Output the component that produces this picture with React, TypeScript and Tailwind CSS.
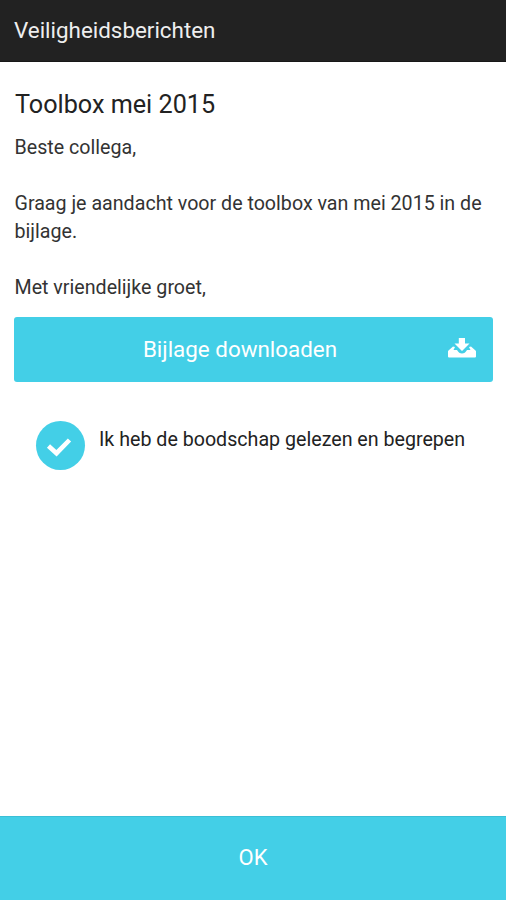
import React from 'react';

const MESSAGE = [
    'Beste collega,',
    'Graag je aandacht voor de toolbox van mei 2015 in de bijlage.',
    'Met vriendelijke groet,',
];

function DownloadIcon() {
    return (
        <svg viewBox="0 0 28 20" className="mr-px mb-[3px] h-5 w-7" fill="currentColor">
            <path d="M10.800 0h6.200v5.500h4.500L14 13 6.500 5.500h4.300z" />
            <path d="M5 8.500l2 .500-1.500 3h3.500q2 3.500 5 3.500t5-3.500h3.500L21 9l2-.500 4.500 4q.5.400.5 1V18.500a1 1 0 0 1-1 1H1a1 1 0 0 1-1-1V13.500q0-.6.500-1z" />
        </svg>
    );
}

function CheckIcon() {
    return (
        <svg viewBox="0 0 26 20" className="mt-0.5 mr-0.5 h-5 w-[26px]" fill="none" stroke="currentColor" strokeWidth="4.600">
            <path d="M2.500 9L10.500 16.200 23.500 3" />
        </svg>
    );
}

export default function App() {
    return (
        <div className="flex h-[900px] w-[506px] flex-col bg-white font-[Roboto,sans-serif] text-[#333]">
            <header className="flex h-[62px] items-center border-b border-[#181818] bg-[#222] px-[14px] pt-px text-[22.400px] text-[#eee]">
                Veiligheidsberichten
            </header>

            <main className="flex-1 pr-[13px] pl-[14px] pt-[26px]">
                <h1 className="pl-px text-[25.200px] leading-[34px] text-[#222]">Toolbox mei 2015</h1>

                <div className="mt-3 space-y-7 pl-[0.500px] text-[19.650px] leading-7">
                    {MESSAGE.map((line) => (
                        <p key={line}>{line}</p>
                    ))}
                </div>

                <button className="mt-[15px] flex h-[65px] w-full items-center rounded-[3px] bg-[#43cfe7] pr-4 text-white">
                    <span className="flex-1 pt-px pl-[18px] text-[22.400px]">Bijlage downloaden</span>
                    <DownloadIcon />
                </button>

                <label className="mt-[38px] flex pl-[21.500px]">
                    <span className="mt-px flex size-[49px] items-center justify-center rounded-full bg-[#43cfe7] text-white">
                        <CheckIcon />
                    </span>
                    <span className="ml-[14.500px] pt-1.5 text-[19.650px] leading-7 text-[#222]">
                        Ik heb de boodschap gelezen en begrepen
                    </span>
                </label>
            </main>

            <button className="h-[84px] border-t border-[#3bbfd6] bg-[#43cfe7] pb-0.5 text-[22px] text-white">
                OK
            </button>
        </div>
    );
}
